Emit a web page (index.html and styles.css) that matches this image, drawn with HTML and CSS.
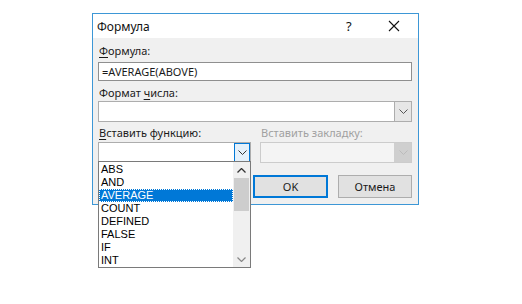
FILE: index.html
```html
<!DOCTYPE html>
<html lang="ru">
<head>
    <meta charset="UTF-8">
    <title>Формула</title>
    <link rel="stylesheet" href="styles.css">
</head>
<body>
    <div class="dialog">
        <div class="titlebar">
            <span class="title">Формула</span>
            <span class="help">?</span>
            <span class="close">
                <svg width="12" height="12" viewBox="0 0 12 12"><path d="M1 1L11 11M11 1L1 11" stroke="#111" stroke-width="1.1" fill="none"/></svg>
            </span>
        </div>
        <div class="content">
            <div class="label"><u>Ф</u>ормула:</div>
            <div class="textbox">=AVERAGE(ABOVE)</div>

            <div class="label second">Формат <u>ч</u>исла:</div>
            <div class="combo wide">
                <div class="combo-text"></div>
                <div class="combo-btn">
                    <svg width="9" height="5" viewBox="0 0 9 5"><path d="M0.5 0.5L4.5 4.5L8.5 0.5" stroke="#555" fill="none"/></svg>
                </div>
            </div>

            <div class="pair">
                <div class="col">
                    <div class="label"><u>В</u>ставить функцию:</div>
                    <div class="combo active">
                        <div class="combo-text"></div>
                        <div class="combo-btn">
                            <svg width="9" height="5" viewBox="0 0 9 5"><path d="M0.5 0.5L4.5 4.5L8.5 0.5" stroke="#333" fill="none"/></svg>
                        </div>
                    </div>
                </div>
                <div class="col">
                    <div class="label disabled">Вставить закладку:</div>
                    <div class="combo off">
                        <div class="combo-text"></div>
                        <div class="combo-btn">
                            <svg width="9" height="5" viewBox="0 0 9 5"><path d="M0.5 0.5L4.5 4.5L8.5 0.5" stroke="#bbb" fill="none"/></svg>
                        </div>
                    </div>
                </div>
            </div>

            <div class="buttons">
                <button class="btn default">OK</button>
                <button class="btn">Отмена</button>
            </div>
        </div>
    </div>

    <!-- open list of the "insert function" combo, drawn over the dialog -->
    <div class="dropdown">
        <ul class="items">
            <li>ABS</li>
            <li>AND</li>
            <li class="selected">AVERAGE</li>
            <li>COUNT</li>
            <li>DEFINED</li>
            <li>FALSE</li>
            <li>IF</li>
            <li>INT</li>
        </ul>
        <div class="scrollbar">
            <div class="arrow">
                <svg width="9" height="5" viewBox="0 0 9 5"><path d="M0.5 4.5L4.5 0.5L8.5 4.5" stroke="#333" stroke-width="1.3" fill="none"/></svg>
            </div>
            <div class="thumb"></div>
            <div class="track"></div>
            <div class="arrow">
                <svg width="9" height="5" viewBox="0 0 9 5"><path d="M0.5 0.5L4.5 4.5L8.5 0.5" stroke="#888" stroke-width="1.2" fill="none"/></svg>
            </div>
        </div>
    </div>
</body>
</html>
```
FILE: styles.css
```css
html, body {
    height: 100%;
}
body {
    position: relative;
    margin: 0;
    min-height: 304px;
    background-color: #ffffff;
    font-family: "Noto Sans", "Open Sans", sans-serif;
    font-size: 11px;
    color: #1a1a1a;
}
.dialog {
    width: 325px;
    margin: 13px 0 0 92px;
    border: 1px solid #3d97d6;
    background-color: #f0f0f0;
}
.titlebar {
    height: 24px;
    background-color: #ffffff;
    display: flex;
    align-items: center;
}
.title {
    flex: 1;
    padding-left: 4px;
    font-size: 12px;
    color: #111;
}
.help {
    width: 14px;
    margin-right: 28px;
    font-size: 13px;
    color: #111;
}
.close {
    width: 14px;
    margin-right: 16px;
    display: flex;
}
.content {
    padding: 5px 6px 6px 5px;
}
.label {
    height: 16px;
    line-height: 16px;
    margin-left: 1px;
    white-space: nowrap;
}
.label u {
    text-decoration-thickness: 1px;
    text-underline-offset: 2px;
}
.label.second {
    margin-top: 4px;
}
.label.disabled {
    color: #a0a0a0;
}
.textbox {
    margin-top: 3px;
    height: 17px;
    line-height: 17px;
    padding-left: 3px;
    background-color: #ffffff;
    border: 1px solid #8f8f8f;
}
.combo {
    display: flex;
    height: 19px;
    background-color: #ffffff;
    border: 1px solid #adadad;
}
.combo-text {
    flex: 1;
}
.combo-btn {
    width: 16px;
    display: flex;
    align-items: center;
    justify-content: center;
    background-color: #e6e6e6;
    border-left: 1px solid #adadad;
}
.combo.active .combo-btn {
    background-color: #e5f1fb;
    border: 1px solid #0078d7;
    width: 14px;
}
.combo.off {
    background-color: #f4f4f4;
    border-color: #cccccc;
}
.combo.off .combo-btn {
    background-color: #cfcfcf;
    border-left-color: #cfcfcf;
}
.pair {
    display: flex;
    gap: 9px;
    margin-top: 3px;
}
.pair .col:first-child {
    width: 153px;
}
.pair .col:last-child {
    flex: 1;
}
.pair .label {
    margin-bottom: 1px;
}
.buttons {
    display: flex;
    justify-content: flex-end;
    gap: 10px;
    margin-top: 12px;
}
.btn {
    width: 74px;
    height: 23px;
    padding: 0;
    font-family: "Noto Sans", "Open Sans", sans-serif;
    font-size: 11px;
    color: #1a1a1a;
    background-color: #e1e1e1;
    border: 1px solid #adadad;
}
.btn.default {
    border: 2px solid #0078d7;
    width: 75px;
}
.dropdown {
    position: absolute;
    left: 98px;
    top: 161px;
    width: 151px;
    height: 105px;
    display: flex;
    background-color: #ffffff;
    border: 1px solid #7a7a7a;
    font-family: "Liberation Sans", Arial, sans-serif;
    font-size: 11px;
    color: #000;
}
.items {
    flex: 1;
    list-style: none;
    margin: 0;
    padding: 1px 0 0 0;
}
.items li {
    height: 13px;
    line-height: 13px;
    padding-left: 2px;
}
.items li.selected {
    background-color: #0078d7;
    color: #ffffff;
    outline: 1px dotted #ffffff;
    outline-offset: -1px;
}
.scrollbar {
    width: 17px;
    display: flex;
    flex-direction: column;
    background-color: #f0f0f0;
}
.arrow {
    height: 16px;
    display: flex;
    align-items: center;
    justify-content: center;
}
.thumb {
    height: 33px;
    margin: 0 1px;
    background-color: #cdcdcd;
}
.track {
    flex: 1;
}
```
